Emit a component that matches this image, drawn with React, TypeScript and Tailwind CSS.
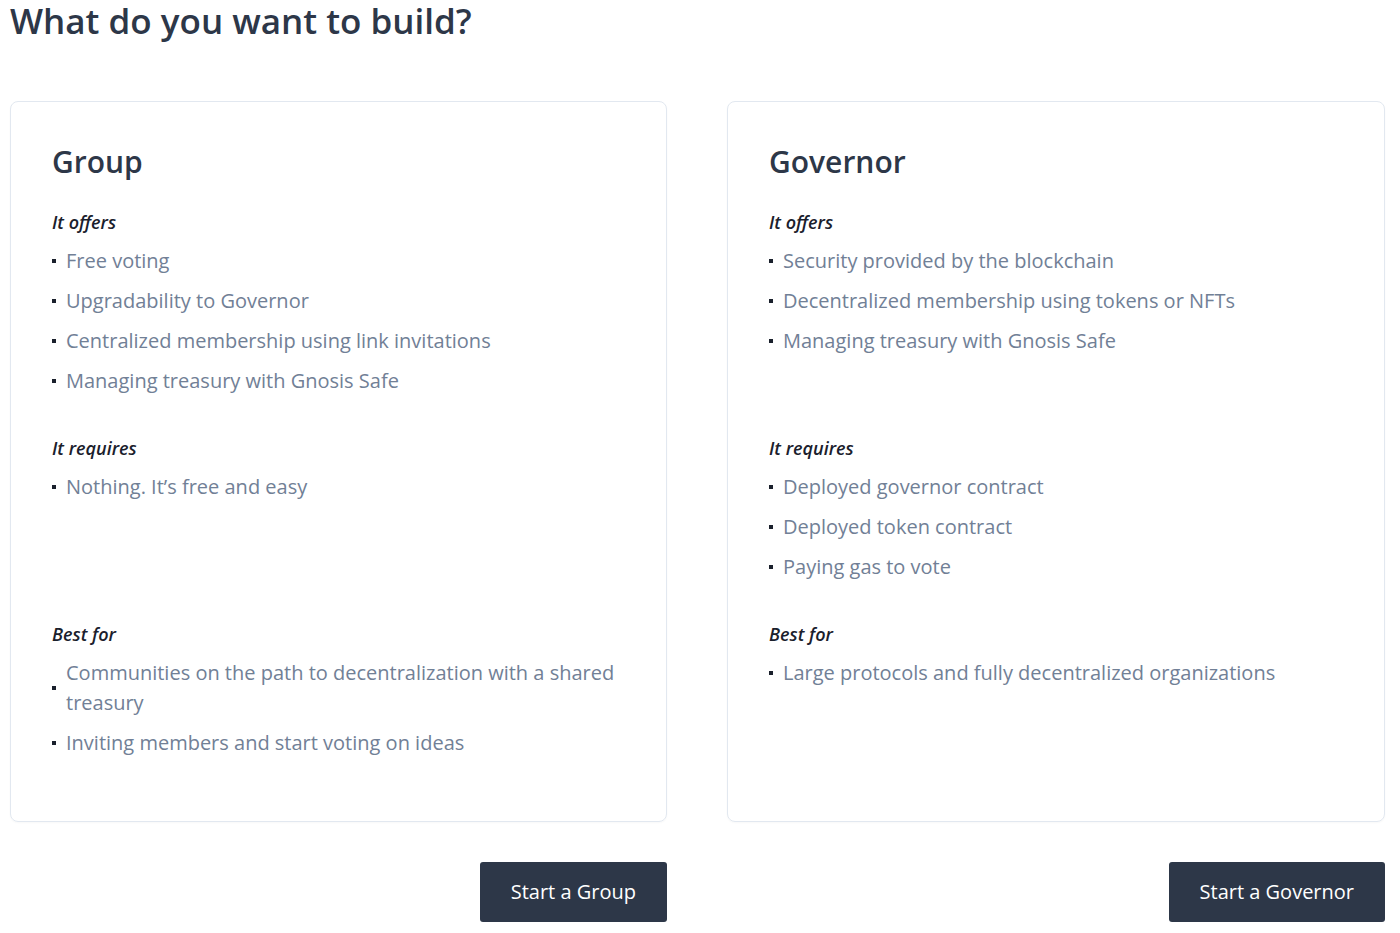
const font = { fontFamily: '"Open Sans", "Noto Sans", sans-serif' };

type Option = {
  title: string;
  offers: string[];
  requires: string[];
  bestFor: string[];
  button: string;
};

const options: Option[] = [
  {
    title: "Group",
    offers: [
      "Free voting",
      "Upgradability to Governor",
      "Centralized membership using link invitations",
      "Managing treasury with Gnosis Safe",
    ],
    requires: ["Nothing. It’s free and easy"],
    bestFor: [
      "Communities on the path to decentralization with a shared treasury",
      "Inviting members and start voting on ideas",
    ],
    button: "Start a Group",
  },
  {
    title: "Governor",
    offers: [
      "Security provided by the blockchain",
      "Decentralized membership using tokens or NFTs",
      "Managing treasury with Gnosis Safe",
    ],
    requires: [
      "Deployed governor contract",
      "Deployed token contract",
      "Paying gas to vote",
    ],
    bestFor: ["Large protocols and fully decentralized organizations"],
    button: "Start a Governor",
  },
];

function Section({
  label,
  items,
  minH,
}: {
  label: string;
  items: string[];
  minH: string;
}) {
  return (
    <div className={minH}>
      <p className="text-[18px] font-semibold italic leading-[26px] text-[#1a202c]">
        {label}
      </p>
      <ul className="mt-[11px] flex flex-col gap-[10px]">
        {items.map((item) => (
          <li key={item} className="flex items-center gap-[10px]">
            <span className="h-[4px] w-[4px] shrink-0 bg-[#1a202c]" />
            <span className="text-[20px] leading-[30px] text-[#718096]">
              {item}
            </span>
          </li>
        ))}
      </ul>
    </div>
  );
}

export default function App() {
  return (
    <div className="min-h-[933px] bg-white pl-[10px] pr-[15px]" style={font}>
      <h1 className="text-[35px] font-semibold leading-[42px] text-[#2d3748]">
        What do you want to build?
      </h1>
      <div className="mt-[59px] grid grid-cols-[657px_658px] gap-[60px]">
        {options.map((option) => (
          <div key={option.title} className="flex flex-col">
            <div className="flex-1 rounded-lg border border-[#e2e8f0] px-[41px] pb-[63px] pt-[37px] shadow-[0_1px_2px_rgba(0,0,0,0.03)]">
              <h2 className="text-[30px] font-semibold leading-[45px] text-[#2d3748]">
                {option.title}
              </h2>
              <div className="mt-[25px] flex flex-col gap-[39px]">
                <Section label="It offers" items={option.offers} minH="min-h-[187px]" />
                <Section label="It requires" items={option.requires} minH="min-h-[147px]" />
                <Section label="Best for" items={option.bestFor} minH="" />
              </div>
            </div>
            <div className="mt-[40px] flex justify-end">
              <button
                type="button"
                className="h-[60px] rounded-[3px] bg-[#2d3748] px-[31px] text-[20px] text-white"
              >
                {option.button}
              </button>
            </div>
          </div>
        ))}
      </div>
    </div>
  );
}
